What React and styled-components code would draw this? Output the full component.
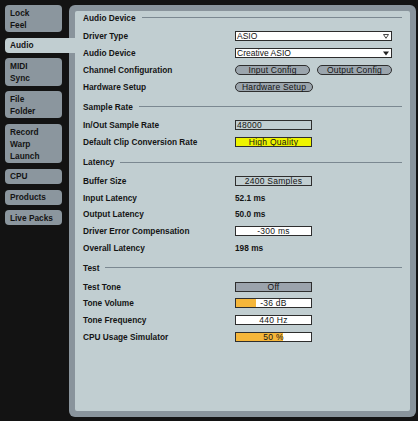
import React from 'react';
import styled, { createGlobalStyle } from 'styled-components';

const GlobalStyle = createGlobalStyle`
  html, body {
    margin: 0;
    padding: 0;
    background: #131313;
  }
  * {
    box-sizing: border-box;
  }
`;

const Page = styled.div`
  display: flex;
  gap: 7px;
  width: 418px;
  height: 421px;
  padding: 5px 2px 4px 5px;
  background: #131313;
  font-family: "Liberation Sans", Arial, sans-serif;
  font-size: 8.3px;
  color: #141414;
`;

const TabColumn = styled.div`
  display: flex;
  flex-direction: column;
  gap: 5.6px;
  width: 57px;
  flex-shrink: 0;
`;

const Tab = styled.div`
  position: relative;
  z-index: ${(p) => (p.$active ? 1 : 0)};
  width: ${(p) => (p.$active ? '70px' : '57px')};
  padding: 1.5px 5px;
  border-radius: ${(p) => (p.$active ? '4px 0 0 4px' : '4px')};
  background: ${(p) => (p.$active ? '#c1ced1' : '#8b969e')};
  font-weight: bold;
  line-height: 12.1px;
`;

const Panel = styled.div`
  flex: 1;
  padding: 6px;
  border-radius: 6px;
  background: #89949c;
`;

const Inner = styled.div`
  height: 100%;
  padding: 0 8px;
  border-radius: 2px;
  background: #c1ced1;
`;

const Section = styled.div`
  margin-top: ${(p) => (p.$first ? '0' : '5px')};
`;

const Heading = styled.div`
  display: flex;
  align-items: center;
  gap: 6px;
  height: 13px;
  margin-bottom: 4px;
  font-weight: bold;
  white-space: nowrap;

  &::after {
    content: '';
    flex: 1;
    height: 1px;
    background: #7b8891;
  }
`;

const Row = styled.div`
  display: flex;
  align-items: center;
  height: 16.75px;
`;

const Label = styled.div`
  width: 152px;
  flex-shrink: 0;
  font-weight: bold;
  white-space: nowrap;
`;

const Controls = styled.div`
  display: flex;
  align-items: center;
  gap: 7px;
`;

const Dropdown = styled.div`
  display: flex;
  align-items: center;
  justify-content: space-between;
  width: 157px;
  height: 10px;
  padding: 0 2px 0 1px;
  border: 1px solid #2c2c2c;
  background: #ffffff;
  font-size: 8.5px;
  line-height: 8px;
`;

const Pill = styled.div`
  display: flex;
  align-items: center;
  justify-content: center;
  width: ${(p) => p.$w}px;
  height: 10px;
  border: 1px solid #2e2e2e;
  border-radius: 5px;
  background: #9ba5ad;
  font-size: 8.5px;
  letter-spacing: 0.2px;
  line-height: 8px;
`;

const Box = styled.div`
  position: relative;
  display: flex;
  align-items: center;
  justify-content: ${(p) => (p.$left ? 'flex-start' : 'center')};
  width: 77px;
  height: 10px;
  padding-left: ${(p) => (p.$left ? '1px' : '0')};
  border: 1px solid #2e2e2e;
  background: ${(p) => p.$bg || 'transparent'};
  font-size: 8.5px;
  letter-spacing: 0.25px;
  line-height: 8px;
  white-space: nowrap;
  overflow: hidden;
`;

const Fill = styled.div`
  position: absolute;
  left: 0;
  top: 0;
  bottom: 0;
  background: #f5b63a;
`;

const BoxText = styled.span`
  position: relative;
`;

const Value = styled.div`
  font-weight: bold;
`;

const Arrow = ({ filled }) => (
  <svg width="6" height="5" viewBox="0 0 6 5">
    {filled ? (
      <polygon points="0,0.5 6,0.5 3,4.5" fill="#222" />
    ) : (
      <polygon points="0.5,0.5 5.5,0.5 3,4.3" fill="none" stroke="#333" strokeWidth="0.9" />
    )}
  </svg>
);

const tabs = [
  ['Lock', 'Feel'],
  ['Audio'],
  ['MIDI', 'Sync'],
  ['File', 'Folder'],
  ['Record', 'Warp', 'Launch'],
  ['CPU'],
  ['Products'],
  ['Live Packs'],
];

const Meter = ({ pct, text }) => (
  <Box $bg="#ffffff">
    <Fill style={{ width: `${pct}%` }} />
    <BoxText>{text}</BoxText>
  </Box>
);

const App = () => (
  <>
    <GlobalStyle />
    <Page>
      <TabColumn>
        {tabs.map((lines) => (
          <Tab key={lines[0]} $active={lines[0] === 'Audio'}>
            {lines.map((l) => (
              <div key={l}>{l}</div>
            ))}
          </Tab>
        ))}
      </TabColumn>
      <Panel>
        <Inner>
          <Section $first>
            <Heading>Audio Device</Heading>
            <Row>
              <Label>Driver Type</Label>
              <Dropdown>
                <span>ASIO</span>
                <Arrow />
              </Dropdown>
            </Row>
            <Row>
              <Label>Audio Device</Label>
              <Dropdown>
                <span>Creative ASIO</span>
                <Arrow filled />
              </Dropdown>
            </Row>
            <Row>
              <Label>Channel Configuration</Label>
              <Controls>
                <Pill $w={75}>Input Config</Pill>
                <Pill $w={75}>Output Config</Pill>
              </Controls>
            </Row>
            <Row>
              <Label>Hardware Setup</Label>
              <Pill $w={78}>Hardware Setup</Pill>
            </Row>
          </Section>

          <Section>
            <Heading>Sample Rate</Heading>
            <Row>
              <Label>In/Out Sample Rate</Label>
              <Box $left>48000</Box>
            </Row>
            <Row>
              <Label>Default Clip Conversion Rate</Label>
              <Box $bg="#eef400">High Quality</Box>
            </Row>
          </Section>

          <Section>
            <Heading>Latency</Heading>
            <Row>
              <Label>Buffer Size</Label>
              <Box>2400 Samples</Box>
            </Row>
            <Row>
              <Label>Input Latency</Label>
              <Value>52.1 ms</Value>
            </Row>
            <Row>
              <Label>Output Latency</Label>
              <Value>50.0 ms</Value>
            </Row>
            <Row>
              <Label>Driver Error Compensation</Label>
              <Box $bg="#ffffff">-300 ms</Box>
            </Row>
            <Row>
              <Label>Overall Latency</Label>
              <Value>198 ms</Value>
            </Row>
          </Section>

          <Section>
            <Heading>Test</Heading>
            <Row>
              <Label>Test Tone</Label>
              <Box $bg="#9ba3ac">Off</Box>
            </Row>
            <Row>
              <Label>Tone Volume</Label>
              <Meter pct={26} text="-36 dB" />
            </Row>
            <Row>
              <Label>Tone Frequency</Label>
              <Box $bg="#ffffff">440 Hz</Box>
            </Row>
            <Row>
              <Label>CPU Usage Simulator</Label>
              <Meter pct={62} text="50 %" />
            </Row>
          </Section>
        </Inner>
      </Panel>
    </Page>
  </>
);

export default App;
